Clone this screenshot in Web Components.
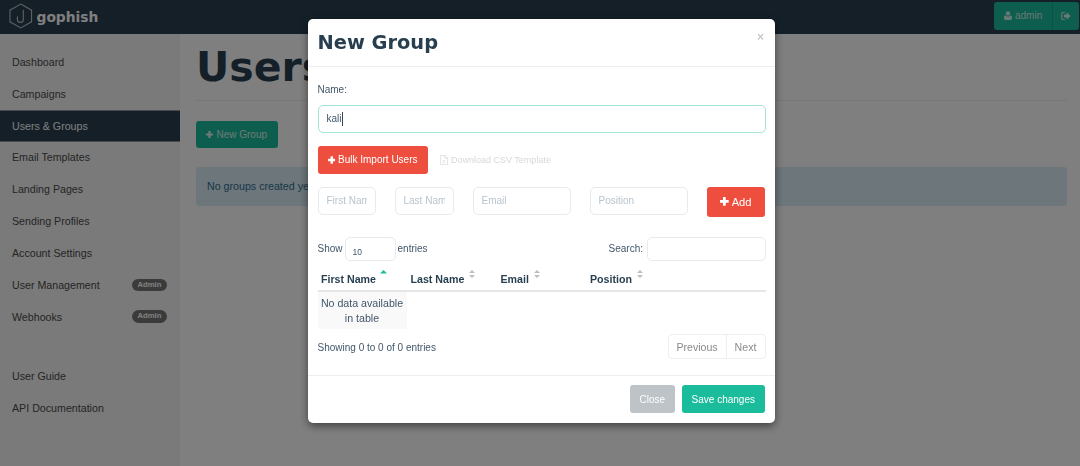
<!DOCTYPE html>
<html>
<head>
<meta charset="utf-8">
<title>Users &amp; Groups - Gophish</title>
<style>
html, body { margin: 0; height: 100%; }
body { font-family: "Liberation Sans", Arial, sans-serif; font-size: 10px; color: #34495e; overflow: hidden; }
</style>
</head>
<body>
<gp-navbar></gp-navbar>
<gp-layout>
  <gp-sidebar></gp-sidebar>
  <gp-page></gp-page>
</gp-layout>
<gp-backdrop></gp-backdrop>
<gp-modal heading="New Group">
  <gp-group-form></gp-group-form>
  <gp-button slot="footer" kind="grey">Close</gp-button>
  <gp-button slot="footer" kind="green">Save changes</gp-button>
</gp-modal>

<script>
const ICONS = {
  plus: '<svg viewBox="0 0 10 10" width="8" height="8" fill="currentColor"><path d="M3.800 0h2.400a.4.4 0 0 1 .4.4v3h3a.4.4 0 0 1 .4.4v2.400a.4.4 0 0 1-.4.4h-3v3a.4.4 0 0 1-.4.4H3.800a.4.4 0 0 1-.4-.4v-3h-3a.4.4 0 0 1-.4-.4V3.800a.4.4 0 0 1 .4-.4h3v-3a.4.4 0 0 1 .4-.4z"/></svg>',
  user: '<svg viewBox="0 0 10 11" width="8" height="9" fill="currentColor"><circle cx="5" cy="3" r="2.700"/><path d="M1.600 5.300C2.500 6.300 3.700 6.800 5 6.800s2.500-.5 3.400-1.500C9.500 5.500 10 6.800 10 8.800 10 10.200 9 11 7.900 11H2.100C1 11 0 10.200 0 8.800c0-2 .5-3.300 1.600-3.500z"/></svg>',
  signout: '<svg viewBox="0 0 12 10" width="10" height="8" fill="currentColor"><path d="M4.500 0H2a2 2 0 0 0-2 2v6a2 2 0 0 0 2 2h2.500V8.600H2a.6.600 0 0 1-.6-.6V2a.6.600 0 0 1 .6-.6h2.500z"/><path d="M7 .4 11.800 5 7 9.600V7H3.400V3H7z"/></svg>',
  file: '<svg viewBox="0 0 9 11" width="8" height="10" fill="none" stroke="currentColor" stroke-width=".8"><path d="M.5.500h5.200L8.500 3.300v7.200h-8z"/><path d="M5.500.500v3h3"/><path d="M2.800 5.500l3 3.200M5.800 5.500l-3 3.200"/></svg>'
};

class GpNavbar extends HTMLElement {
  constructor() {
    super();
    this.attachShadow({ mode: "open" });
    this.shadowRoot.innerHTML = `
<style>
:host { display: flex; justify-content: space-between; height: 34px; background: #283f50; padding: 2px 1px 0 9px; box-sizing: border-box; }
.brand { display: flex; align-items: center; gap: 4px; height: 27px; color: #fff; font: bold 13.800px "DejaVu Sans", sans-serif; }
.brand svg { display: block; }
.brand span { margin-top: 3px; }
.user { display: flex; height: 27.500px; background: #1abc9c; border-radius: 3px; color: rgba(255,255,255,.8); }
.user div { display: flex; align-items: center; }
.name { width: 58.500px; gap: 3px; padding-left: 10px; box-sizing: border-box; border-right: 1px solid #17a88b; }
.out { width: 26.500px; justify-content: center; }
</style>
<div class="brand">
  <svg width="23.500" height="26" viewBox="0 0 24 26" fill="none" stroke="#b8bcbf" stroke-width="1.200"><path d="M12 .8 23 7v12L12 25.200 1 19V7z"/><path d="M14.600 6.500v10a3 3 0 0 1-6 0v-1.800l-.6 1"/></svg>
  <span>gophish</span>
</div>
<div class="user">
  <div class="name">${ICONS.user}<span>admin</span></div>
  <div class="out">${ICONS.signout}</div>
</div>`;
  }
}

class GpLayout extends HTMLElement {
  constructor() {
    super();
    this.attachShadow({ mode: "open" });
    this.shadowRoot.innerHTML = `
<style>
:host { display: flex; height: 432px; background: #fff; }
</style>
<slot></slot>`;
  }
}

class GpSidebar extends HTMLElement {
  constructor() {
    super();
    this.attachShadow({ mode: "open" });
    const row = ([label, flag]) => `
      <a class="${flag === "active" ? "active" : ""}"><span>${label.replace("&", "&amp;")}</span>${flag === "admin" ? "<b>Admin</b>" : ""}</a>`;
    const items = [
      ["Dashboard"], ["Campaigns"], ["Users & Groups", "active"], ["Email Templates"],
      ["Landing Pages"], ["Sending Profiles"], ["Account Settings"],
      ["User Management", "admin"], ["Webhooks", "admin"]
    ];
    this.shadowRoot.innerHTML = `
<style>
:host { display: block; width: 180px; flex: none; background: #f5f5f5; padding-top: 12px; box-sizing: border-box; font-size: 10.670px; }
a { display: flex; align-items: center; justify-content: space-between; height: 31.850px; padding: 0 13px 0 12px; color: #4a4a4a; box-sizing: border-box; }
a.active { background: #283f50; color: #fff; border-top: 1px solid #8a97a1; border-bottom: 1px solid #8a97a1; }
b { display: block; width: 35px; height: 12.500px; text-align: center; background: #777; color: #fff; border-radius: 7px; font-size: 7.700px; line-height: 12.500px; }
.gap { height: 27.500px; }
</style>
${items.map(row).join("")}
<div class="gap"></div>
${[["User Guide"], ["API Documentation"]].map(row).join("")}`;
  }
}

class GpPage extends HTMLElement {
  constructor() {
    super();
    this.attachShadow({ mode: "open" });
    this.shadowRoot.innerHTML = `
<style>
:host { display: block; flex: 1; padding: 0 13px 0 16px; }
h1 { margin: 0; height: 66px; border-bottom: 1px solid #eee; font: bold 41px/67.700px "DejaVu Sans", sans-serif; color: #283f50; white-space: nowrap; overflow: hidden; }
.new { margin-top: 19.500px; width: 81.500px; height: 27.500px; display: flex; align-items: center; justify-content: center; gap: 3px; background: #1abc9c; border-radius: 3px; color: rgba(255,255,255,.85); }
.new svg { width: 7px; height: 7px; }
.alert { margin-top: 18.500px; height: 39.500px; display: flex; align-items: center; padding-left: 11px; background: #d9edf7; border-radius: 3px; color: #31708f; font-size: 10.670px; }
</style>
<h1>Users &amp; Groups</h1>
<div class="new">${ICONS.plus}<span>New Group</span></div>
<div class="alert">No groups created yet. Let's create one!</div>`;
  }
}

class GpBackdrop extends HTMLElement {
  constructor() {
    super();
    this.attachShadow({ mode: "open" });
    this.shadowRoot.innerHTML = `
<style>
:host { position: fixed; inset: 0; background: rgba(0,0,0,.5); }
</style>`;
  }
}

class GpButton extends HTMLElement {
  constructor() {
    super();
    this.attachShadow({ mode: "open" });
    this.shadowRoot.innerHTML = `
<style>
:host { display: inline-flex; align-items: center; justify-content: center; gap: 3px; height: 28px; padding: 0 10px; border-radius: 3px; color: #fff; box-sizing: border-box; white-space: nowrap; }
:host([kind="red"]) { background: #ee4e3d; }
:host([kind="green"]) { background: #1abc9c; }
:host([kind="grey"]) { background: #bdc3c7; }
</style>
<slot></slot>`;
  }
}

class GpModal extends HTMLElement {
  constructor() {
    super();
    this.attachShadow({ mode: "open" });
    this.shadowRoot.innerHTML = `
<style>
:host { position: fixed; left: 307.500px; top: 18.500px; width: 467.500px; height: 404px; display: flex; flex-direction: column; background: #fff; border-radius: 5px; box-shadow: 0 3px 9px rgba(0,0,0,.5); }
header { height: 48px; flex: none; box-sizing: border-box; border-bottom: 1px solid #eee; padding: 0 10px; display: flex; align-items: center; justify-content: space-between; }
h4 { margin: 0; font: bold 19.400px "DejaVu Sans", sans-serif; color: #283f50; }
.close { align-self: flex-start; margin-top: 11px; margin-right: 1px; font: bold 12px "Liberation Sans", sans-serif; color: #c9c9c9; }
main { flex: 1; padding: 0 9.500px 0 10px; }
footer { height: 47.500px; flex: none; box-sizing: border-box; border-top: 1px solid #eee; padding: 9px 10px 0; display: flex; justify-content: flex-end; gap: 6.500px; }
</style>
<header><h4></h4><span class="close">×</span></header>
<main><slot></slot></main>
<footer><slot name="footer"></slot></footer>`;
    this.shadowRoot.querySelector("h4").textContent = this.getAttribute("heading");
  }
}

class GpGroupForm extends HTMLElement {
  constructor() {
    super();
    this.attachShadow({ mode: "open" });
    const sort = `<svg class="sort grey" width="6" height="8" viewBox="0 0 6 8"><path d="M3 0 6 3H0zM3 8 0 5h6z" fill="#bdbdbd"/></svg>`;
    this.shadowRoot.innerHTML = `
<style>
:host { display: block; color: #41566a; }
.field { box-sizing: border-box; border: 1px solid #e8eaec; border-radius: 5px; background: #fff; height: 28.500px; padding: 0 8px; display: flex; align-items: center; white-space: nowrap; color: #b9c4cd; }
.field span { overflow: hidden; }
.label { padding: 16px 0 9px; line-height: 13px; }
.name { border-color: #a3e4d7; color: #41566a; height: 28px; }
.caret { display: inline-block; width: 1px; height: 14px; background: #34495e; }
.bulk { display: flex; align-items: center; gap: 12.500px; margin-top: 13.500px; color: #d5d8da; font-size: 9px; }
.bulk gp-button { width: 110px; height: 27.500px; font-size: 10px; }
.dl { display: flex; align-items: center; gap: 3px; }
.people { display: grid; grid-template-columns: 58px 59px 98px 98px 58.500px; column-gap: 19px; margin-top: 13px; align-items: start; }
.add { font-size: 11.200px; height: 30.500px; padding: 0; }
.add svg { width: 8.700px; height: 8.700px; }
.bar { display: flex; justify-content: space-between; align-items: flex-start; margin-top: 20px; height: 24px; }
.bar > div { display: flex; align-items: center; gap: 2px; height: 22px; }
.bar > div + div { gap: 4px; }
.mini { height: 24px; flex: none; }
.bar .mini { margin-top: 2px; }
.len { width: 51px; padding: 5px 0 0 7px; font-size: 8.500px; color: #41566a; }
.search { width: 118.500px; }
.thead { display: grid; grid-template-columns: 89.500px 90px 89.500px 1fr; height: 29px; border-bottom: 2px solid #e6e6e6; font-weight: 700; font-size: 10.650px; color: #283f50; }
.thead span { display: flex; padding: 11px 0 0 3.500px; gap: 4px; line-height: 14px; }
.sort { display: block; margin-top: -2px; }
.sort.grey { margin-left: 1px; }
.empty { width: 89px; height: 37px; box-sizing: border-box; background: #f9f9f9; text-align: center; font-size: 10.650px; line-height: 15px; padding: 3.500px 2px 0; }
.foot { display: flex; justify-content: space-between; align-items: center; margin-top: 5px; height: 25px; }
.foot > div:first-child { padding-top: 1px; }
.pager { display: flex; height: 25px; box-sizing: border-box; border: 1px solid #eee; border-radius: 4px; color: #8a8a8a; font-size: 10.600px; }
.pager span { display: flex; align-items: center; justify-content: center; width: 57px; }
.pager span + span { border-left: 1px solid #eee; width: 38px; }
</style>
<div class="label">Name:</div>
<div class="field name">kali<i class="caret"></i></div>
<div class="bulk">
  <gp-button kind="red">${ICONS.plus}<span>Bulk Import Users</span></gp-button>
  <div class="dl">${ICONS.file}<span>Download CSV Template</span></div>
</div>
<div class="people">
  <div class="field"><span>First Name</span></div>
  <div class="field"><span>Last Name</span></div>
  <div class="field"><span>Email</span></div>
  <div class="field"><span>Position</span></div>
  <gp-button class="add" kind="red">${ICONS.plus}<span>Add</span></gp-button>
</div>
<div class="bar">
  <div>Show <div class="field mini len">10</div> entries</div>
  <div>Search: <div class="field mini search"></div></div>
</div>
<div class="thead">
  <span>First Name<svg class="sort" width="7" height="8" viewBox="0 0 7 8"><path d="M3.500 0 7 3.500H0z" fill="#1abc9c"/></svg></span>
  <span>Last Name${sort}</span>
  <span>Email${sort}</span>
  <span>Position${sort}</span>
</div>
<div class="empty">No data available in table</div>
<div class="foot">
  <div>Showing 0 to 0 of 0 entries</div>
  <div class="pager"><span>Previous</span><span>Next</span></div>
</div>`;
  }
}

customElements.define("gp-navbar", GpNavbar);
customElements.define("gp-layout", GpLayout);
customElements.define("gp-sidebar", GpSidebar);
customElements.define("gp-page", GpPage);
customElements.define("gp-backdrop", GpBackdrop);
customElements.define("gp-button", GpButton);
customElements.define("gp-modal", GpModal);
customElements.define("gp-group-form", GpGroupForm);
</script>
</body>
</html>
